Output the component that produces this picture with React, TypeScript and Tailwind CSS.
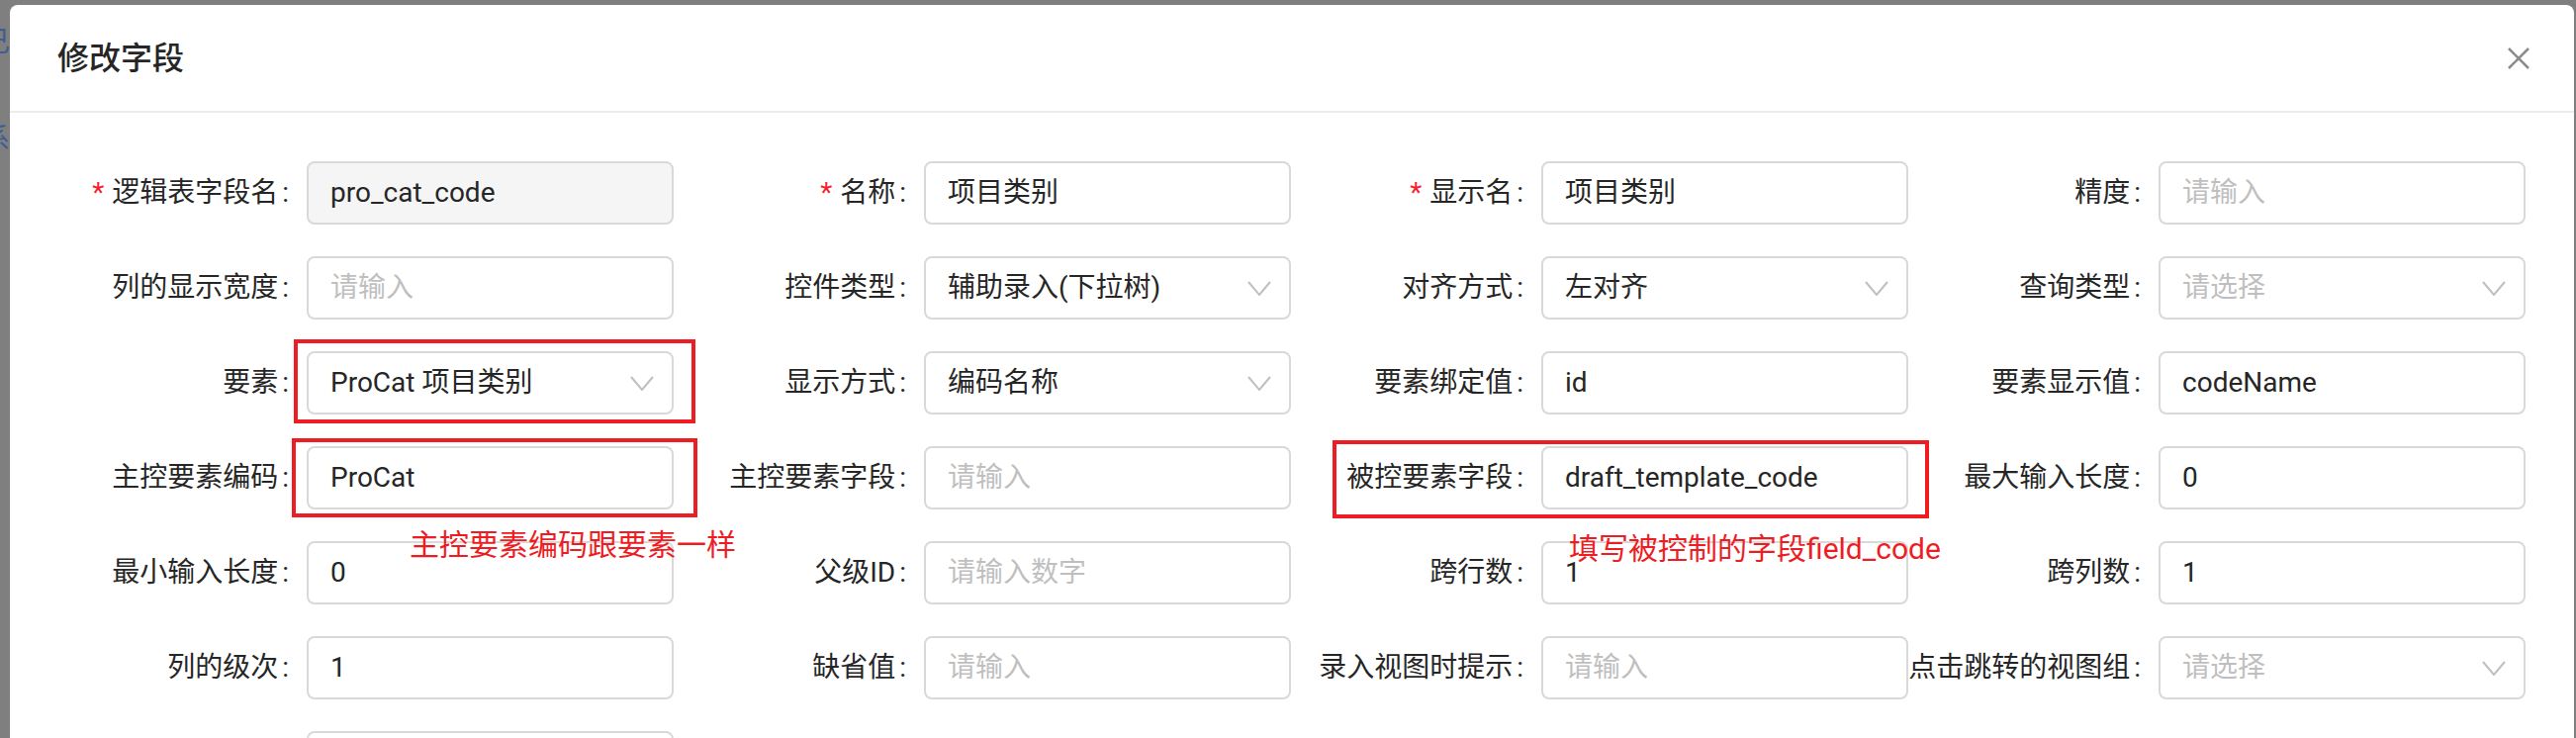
import React from "react";

type FieldProps = {
  label?: string;
  required?: boolean;
  value?: string;
  placeholder?: string;
  select?: boolean;
  disabled?: boolean;
};

function Arrow() {
  return (
    <svg width="24" height="15" viewBox="0 0 24 15" className="shrink-0">
      <polyline points="1,1 12,14 23,1" fill="none" stroke="#bfbfbf" strokeWidth="2" />
    </svg>
  );
}

function Field({ label = "", required, value, placeholder, select, disabled }: FieldProps) {
  return (
    <div className="flex h-[64px] items-center">
      <div className="flex w-[252px] shrink-0 items-center justify-end whitespace-nowrap text-[28px] leading-none text-[#262626]">
        {required && <span className="mr-[8px] text-[#f5222d]">*</span>}
        {label && <span>{label}</span>}
        {label && <span className="ml-[4px] mr-[18px]">:</span>}
      </div>
      <div
        className={
          "flex h-[64px] w-[371px] shrink-0 items-center justify-between rounded-[8px] border-2 border-[#d9d9d9] pl-[22px] pr-[18px] text-[28px] leading-none " +
          (disabled ? "bg-[#f5f5f5]" : "bg-white")
        }
      >
        {value ? (
          <span className="whitespace-nowrap text-[#262626]">{value}</span>
        ) : (
          <span className="whitespace-nowrap text-[#bfbfbf]">{placeholder ?? ""}</span>
        )}
        {select && <Arrow />}
      </div>
    </div>
  );
}

export default function App() {
  return (
    <div className="relative h-[746px] w-[2604px] overflow-hidden bg-[#7f7f7f] font-['Roboto','Noto_Sans_CJK_SC',sans-serif]">
      {/* page behind the mask */}
      <div className="absolute left-[-18px] top-[29px] text-[28px] leading-none text-[#3e5d93]">己</div>
      <div className="absolute left-[-18px] top-[127px] text-[28px] leading-none text-[#3e5d93]">系</div>

      {/* modal */}
      <div className="absolute left-[10px] right-[2px] top-[5px] bottom-[-300px] rounded-[8px] bg-white">
        <div className="flex h-[109px] items-center justify-between border-b-2 border-[#ececec]">
          <div className="pl-[48px] text-[32px] font-medium leading-none text-[#262626]">修改字段</div>
          <div className="flex h-full w-[112px] items-center justify-center">
            <svg width="22" height="22" viewBox="0 0 22 22">
              <line x1="1" y1="1" x2="21" y2="21" stroke="#8c8c8c" strokeWidth="2.5" />
              <line x1="21" y1="1" x2="1" y2="21" stroke="#8c8c8c" strokeWidth="2.5" />
            </svg>
          </div>
        </div>

        <div className="grid grid-cols-[repeat(4,624px)] gap-y-[32px] px-[48px] pt-[49px]">
          <Field label="逻辑表字段名" required value="pro_cat_code" disabled />
          <Field label="名称" required value="项目类别" />
          <Field label="显示名" required value="项目类别" />
          <Field label="精度" placeholder="请输入" />

          <Field label="列的显示宽度" placeholder="请输入" />
          <Field label="控件类型" value="辅助录入(下拉树)" select />
          <Field label="对齐方式" value="左对齐" select />
          <Field label="查询类型" placeholder="请选择" select />

          <Field label="要素" value="ProCat 项目类别" select />
          <Field label="显示方式" value="编码名称" select />
          <Field label="要素绑定值" value="id" />
          <Field label="要素显示值" value="codeName" />

          <Field label="主控要素编码" value="ProCat" />
          <Field label="主控要素字段" placeholder="请输入" />
          <Field label="被控要素字段" value="draft_template_code" />
          <Field label="最大输入长度" value="0" />

          <Field label="最小输入长度" value="0" />
          <Field label="父级ID" placeholder="请输入数字" />
          <Field label="跨行数" value="1" />
          <Field label="跨列数" value="1" />

          <Field label="列的级次" value="1" />
          <Field label="缺省值" placeholder="请输入" />
          <Field label="录入视图时提示" placeholder="请输入" />
          <Field label="点击跳转的视图组" placeholder="请选择" select />

          <Field label="" />
        </div>
      </div>

      {/* annotations */}
      <div className="absolute left-[297px] top-[343px] h-[85px] w-[406px] border-4 border-[#ee1d23]" />
      <div className="absolute left-[295px] top-[443px] h-[80px] w-[410px] border-4 border-[#ee1d23]" />
      <div className="absolute left-[1347px] top-[445px] h-[79px] w-[603px] border-4 border-[#ee1d23]" />
      <div className="absolute left-[414px] top-[536px] whitespace-nowrap text-[30px] leading-none text-[#ee1d23]">
        主控要素编码跟要素一样
      </div>
      <div className="absolute left-[1586px] top-[540px] whitespace-nowrap text-[30px] leading-none text-[#ee1d23]">
        填写被控制的字段field_code
      </div>
    </div>
  );
}
